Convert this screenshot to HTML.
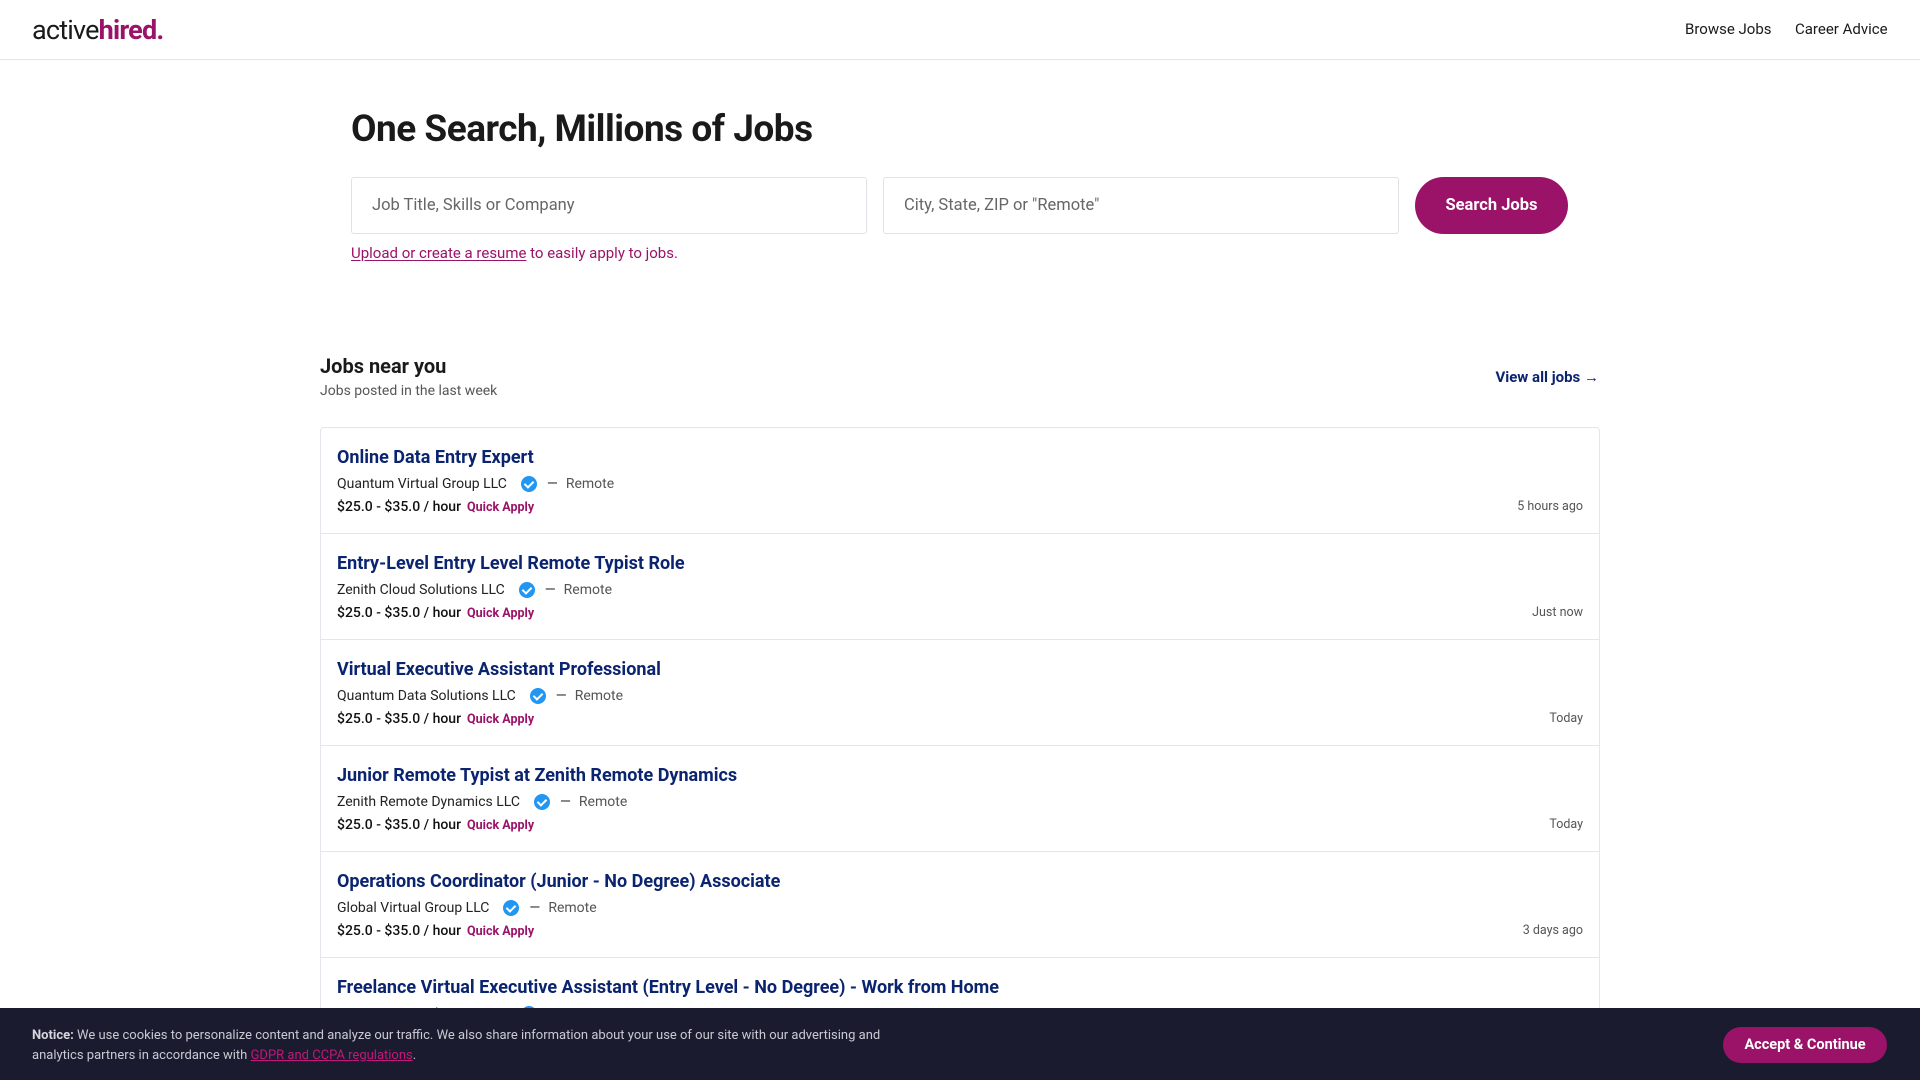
<!DOCTYPE html>
<html><head><meta charset="utf-8"><style>
*{box-sizing:border-box;margin:0;padding:0}
body{width:1920px;height:1080px;overflow:hidden;font-family:"Roboto","Liberation Sans",sans-serif;background:#fff;color:#1a1a1a;position:relative}
.hdr{height:60px;border-bottom:1px solid #e3e6ea;position:relative}
.logo{position:absolute;left:32px;top:14px;font-size:27px;letter-spacing:-0.8px;color:#1a1a1a}
.logo b{color:#9b1368}
.nav{position:absolute;top:20px;font-size:15px;color:#1a1a1a}
h1{position:absolute;left:351px;top:108px;font-size:37px;font-weight:700;letter-spacing:-0.5px;color:#1a1a1a}
.inp{position:absolute;top:177px;height:57px;border:1px solid #dfe3e8;border-radius:3px;width:516px;font-size:16.5px;color:#666;padding:18px 0 0 20px}
.btn{position:absolute;left:1415px;top:177px;width:153px;height:57px;border-radius:29px;background:#9b1368;color:#fff;font-weight:700;font-size:16.5px;text-align:center;line-height:57px}
.up{position:absolute;left:351px;top:244px;font-size:15px;color:#9b1368}
.up u{text-underline-offset:2px}
.jn{position:absolute;left:320px;top:354px;font-size:20px;font-weight:700}
.js{position:absolute;left:320px;top:383px;font-size:14px;color:#555}
.va{position:absolute;right:321px;top:368px;font-size:15px;font-weight:700;color:#0b2470}
.list{position:absolute;left:320px;top:427px;width:1280px;border:1px solid #e3e6ea;border-radius:4px}
.it{height:106px;border-bottom:1px solid #e3e6ea;position:relative;padding:19px 0 0 16px}
.t{font-size:18px;font-weight:700;color:#0b2470;height:24px}
.c{font-size:14px;color:#222;margin-top:4px;display:flex;align-items:center;height:18px}
.ck{display:inline-block;width:16px;height:16px;border-radius:50%;background:#2196f3;margin:0 10px 0 14px;position:relative}
.ck:after{content:"";position:absolute;left:5px;top:3px;width:4px;height:7px;border:solid #fff;border-width:0 2px 2px 0;transform:rotate(45deg)}
.c .r{color:#555;margin-left:8px}
.s{font-size:14px;color:#111;margin-top:6px;font-weight:500}
.s span{color:#9b1368;font-size:12.5px;font-weight:700;margin-left:6px}
.tm{position:absolute;right:16px;top:71px;font-size:12.5px;color:#555}
.cb{position:absolute;left:0;top:1008px;width:1920px;height:72px;background:#1a1b2e;color:#c9cad3;font-size:13px;line-height:20px;padding:18px 32px}
.cb b{color:#d5d6de}
.cb a{color:#c2187a;text-decoration:underline}
.acc{position:absolute;left:1723px;top:19px;width:164px;height:36px;border-radius:18px;background:#9b1368;color:#fff;font-weight:700;font-size:14.5px;text-align:center;line-height:36px}
</style></head><body>
<div class="hdr"><div class="logo">active<b>hired.</b></div>
<div class="nav" style="left:1685px">Browse Jobs</div><div class="nav" style="left:1795px">Career Advice</div></div>
<h1>One Search, Millions of Jobs</h1>
<div class="inp" style="left:351px">Job Title, Skills or Company</div>
<div class="inp" style="left:883px">City, State, ZIP or "Remote"</div>
<div class="btn">Search Jobs</div>
<div class="up"><u>Upload or create a resume</u> to easily apply to jobs.</div>
<div class="jn">Jobs near you</div>
<div class="js">Jobs posted in the last week</div>
<div class="va">View all jobs →</div>
<div class="list">
<div class="it"><div class="t">Online Data Entry Expert</div><div class="c">Quantum Virtual Group LLC<i class="ck"></i>— <span class="r">Remote</span></div><div class="s">$25.0 - $35.0 / hour<span>Quick Apply</span></div><div class="tm">5 hours ago</div></div>
<div class="it"><div class="t">Entry-Level Entry Level Remote Typist Role</div><div class="c">Zenith Cloud Solutions LLC<i class="ck"></i>— <span class="r">Remote</span></div><div class="s">$25.0 - $35.0 / hour<span>Quick Apply</span></div><div class="tm">Just now</div></div>
<div class="it"><div class="t">Virtual Executive Assistant Professional</div><div class="c">Quantum Data Solutions LLC<i class="ck"></i>— <span class="r">Remote</span></div><div class="s">$25.0 - $35.0 / hour<span>Quick Apply</span></div><div class="tm">Today</div></div>
<div class="it"><div class="t">Junior Remote Typist at Zenith Remote Dynamics</div><div class="c">Zenith Remote Dynamics LLC<i class="ck"></i>— <span class="r">Remote</span></div><div class="s">$25.0 - $35.0 / hour<span>Quick Apply</span></div><div class="tm">Today</div></div>
<div class="it"><div class="t">Operations Coordinator (Junior - No Degree) Associate</div><div class="c">Global Virtual Group LLC<i class="ck"></i>— <span class="r">Remote</span></div><div class="s">$25.0 - $35.0 / hour<span>Quick Apply</span></div><div class="tm">3 days ago</div></div>
<div class="it"><div class="t">Freelance Virtual Executive Assistant (Entry Level - No Degree) - Work from Home</div><div class="c">Quantum Virtual Group LLC<i class="ck"></i>— <span class="r">Remote</span></div><div class="s">$25.0 - $35.0 / hour<span>Quick Apply</span></div><div class="tm">Today</div></div>
</div>
<div class="cb"><b>Notice:</b> We use cookies to personalize content and analyze our traffic. We also share information about your use of our site with our advertising and<br>analytics partners in accordance with <a>GDPR and CCPA regulations</a>.
<div class="acc">Accept &amp; Continue</div></div>
</body></html>
